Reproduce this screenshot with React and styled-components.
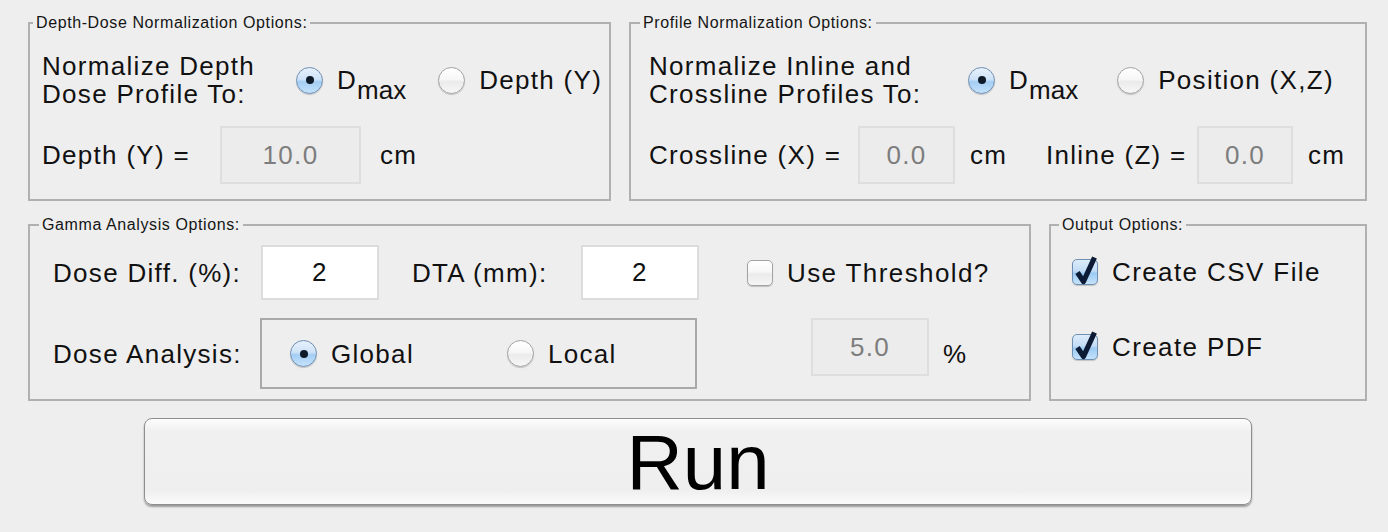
import React from 'react';
import styled, { createGlobalStyle } from 'styled-components';

const GlobalStyle = createGlobalStyle`
  html, body {
    margin: 0;
    padding: 0;
    background: #eeeeee;
  }
  body {
    font-family: "Liberation Sans", Arial, sans-serif;
    color: #111;
  }
`;

const Window = styled.div`
  box-sizing: border-box;
  width: 1388px;
  height: 532px;
  padding: 13px 0 0 28px;
  display: flex;
  flex-direction: column;
`;

const PanelRow = styled.div`
  display: flex;
  gap: 18px;
  margin-top: ${p => p.$top || 0}px;
`;

const Panel = styled.fieldset`
  box-sizing: border-box;
  width: ${p => p.$w}px;
  min-width: 0;
  margin: 0;
  padding: ${p => p.$pad};
  border: 2px solid #b0b0b0;
`;

const Legend = styled.legend`
  font-size: 16px;
  letter-spacing: 0.6px;
  line-height: 20px;
  padding: 0 3px;
  margin-left: ${p => p.$indent}px;
  color: #151515;
`;

const Row = styled.div`
  display: flex;
  align-items: ${p => p.$align || 'center'};
  margin-top: ${p => p.$top || 0}px;
`;

const Text = styled.div`
  flex: none;
  width: ${p => (p.$w ? `${p.$w}px` : 'auto')};
  margin-left: ${p => p.$ml || 0}px;
  align-self: ${p => p.$self || 'auto'};
  font-size: 26px;
  letter-spacing: 1.3px;
  line-height: 28px;
  white-space: nowrap;
`;

const TextBox = styled.div`
  box-sizing: border-box;
  flex: none;
  width: ${p => p.$w}px;
  height: ${p => p.$h || 58}px;
  margin-left: ${p => p.$ml || 0}px;
  display: flex;
  align-items: center;
  justify-content: center;
  font-size: 26px;
  letter-spacing: 1.3px;
  border: 2px solid ${p => (p.$off ? '#dedede' : '#dcdcdc')};
  background: ${p => (p.$off ? '#ececec' : '#ffffff')};
  color: ${p => (p.$off ? '#7d7d7d' : '#111')};
`;

const Options = styled.div`
  display: flex;
  align-items: center;
  gap: ${p => p.$gap}px;
`;

const Option = styled.label`
  display: flex;
  align-items: center;
  gap: 14px;
  font-size: 26px;
  letter-spacing: 1.3px;
  line-height: 28px;
  white-space: nowrap;
`;

const RadioDot = styled.span`
  box-sizing: border-box;
  flex: none;
  width: 27px;
  height: 27px;
  border-radius: 50%;
  display: flex;
  align-items: center;
  justify-content: center;
  border: 1px solid ${p => (p.$on ? '#6f8fb2' : '#a2a2a2')};
  background: ${p =>
    p.$on
      ? 'linear-gradient(#e6f1fc 0%, #cfe3f8 45%, #a4cdf3 55%, #c4e2fb 100%)'
      : 'linear-gradient(#ffffff 0%, #f7f7f7 45%, #ebebeb 55%, #f7f7f7 100%)'};
  box-shadow: 0 1px 1px rgba(0, 0, 0, 0.18);

  &::after {
    content: '';
    display: ${p => (p.$on ? 'block' : 'none')};
    width: 8px;
    height: 8px;
    border-radius: 50%;
    background: #0e1a27;
  }
`;

const Sub = styled.sub`
  font-size: 26px;
  vertical-align: -10px;
  line-height: 0;
  letter-spacing: 0;
`;

const GroupBox = styled.div`
  box-sizing: border-box;
  width: 437px;
  height: 71px;
  padding-left: 28px;
  display: flex;
  align-items: center;
  border: 2px solid #a9a9a9;
`;

const CheckWrap = styled.label`
  display: flex;
  align-items: center;
  gap: 14px;
  margin-left: ${p => p.$ml || 0}px;
  margin-top: ${p => p.$top || 0}px;
  font-size: 26px;
  letter-spacing: 1.4px;
  line-height: 36px;
  white-space: nowrap;
`;

const Box = styled.span`
  box-sizing: border-box;
  flex: none;
  width: 26px;
  height: 26px;
  border-radius: 5px;
  display: flex;
  border: 1px solid ${p => (p.$on ? '#6f8fb2' : '#a2a2a2')};
  background: ${p =>
    p.$on
      ? 'linear-gradient(#dcecfb 0%, #c3dcf6 45%, #9ccaf3 55%, #c4e2fb 100%)'
      : 'linear-gradient(#ffffff 0%, #f7f7f7 45%, #ebebeb 55%, #f5f5f5 100%)'};
  box-shadow: 0 1px 1px rgba(0, 0, 0, 0.18);

  svg {
    overflow: visible;
  }
`;

const RunRow = styled.div`
  margin-top: 17px;
  padding-left: 116px;
`;

const RunButton = styled.button`
  box-sizing: border-box;
  width: 1108px;
  height: 87px;
  border: 1px solid #8e8e8e;
  border-radius: 8px;
  background: linear-gradient(#fdfdfd 0%, #f0f0f0 14%, #efefef 84%, #fbfbfb 100%);
  box-shadow: 0 2px 2px rgba(0, 0, 0, 0.35);
  font-family: "Liberation Sans", Arial, sans-serif;
  font-size: 78px;
  line-height: 1;
  color: #000;
  padding: 0;
`;

function Radio({ on, children }) {
  return (
    <Option>
      <RadioDot $on={on} />
      <span>{children}</span>
    </Option>
  );
}

function Check({ on, children, ml, top }) {
  return (
    <CheckWrap $ml={ml} $top={top}>
      <Box $on={on}>
        {on && (
          <svg width="26" height="26" viewBox="0 0 26 26">
            <path
              d="M4.5 12.5 L10.5 21.5 L21.5 -2.5"
              fill="none"
              stroke="#0c1a35"
              strokeWidth="5.2"
              strokeLinecap="butt"
              strokeLinejoin="round"
            />
          </svg>
        )}
      </Box>
      <span>{children}</span>
    </CheckWrap>
  );
}

const Dmax = () => (
  <>
    D<Sub>max</Sub>
  </>
);

export default function App() {
  return (
    <Window>
      <GlobalStyle />
      <PanelRow>
        <Panel $w={583} $pad="19px 12px 15px 12px">
          <Legend $indent={-9}>Depth-Dose Normalization Options:</Legend>
          <Row>
            <Text $w={254}>
              Normalize Depth
              <br />
              Dose Profile To:
            </Text>
            <Options $gap={32}>
              <Radio on>
                <Dmax />
              </Radio>
              <Radio>Depth (Y)</Radio>
            </Options>
          </Row>
          <Row $top={18}>
            <Text $w={178}>Depth (Y) =</Text>
            <TextBox $w={141} $off>
              10.0
            </TextBox>
            <Text $ml={19}>cm</Text>
          </Row>
        </Panel>

        <Panel $w={738} $pad="19px 18px 15px 18px">
          <Legend $indent={-9}>Profile Normalization Options:</Legend>
          <Row>
            <Text $w={319}>
              Normalize Inline and
              <br />
              Crossline Profiles To:
            </Text>
            <Options $gap={39}>
              <Radio on>
                <Dmax />
              </Radio>
              <Radio>Position (X,Z)</Radio>
            </Options>
          </Row>
          <Row $top={18}>
            <Text $w={209}>Crossline (X) =</Text>
            <TextBox $w={97} $off>
              0.0
            </TextBox>
            <Text $w={76} $ml={15}>
              cm
            </Text>
            <Text $w={151}>Inline (Z) =</Text>
            <TextBox $w={96} $off>
              0.0
            </TextBox>
            <Text $ml={15}>cm</Text>
          </Row>
        </Panel>
      </PanelRow>

      <PanelRow $top={14}>
        <Panel $w={1003} $pad="10px 23px 10px 23px">
          <Legend $indent={-14}>Gamma Analysis Options:</Legend>
          <Row>
            <Text $w={208}>Dose Diff. (%):</Text>
            <TextBox $w={118} $h={55}>
              2
            </TextBox>
            <Text $w={169} $ml={33}>
              DTA (mm):
            </Text>
            <TextBox $w={118} $h={55}>
              2
            </TextBox>
            <Check ml={48}>Use Threshold?</Check>
          </Row>
          <Row $top={18} $align="flex-start">
            <Text $w={207} $self="center">
              Dose Analysis:
            </Text>
            <GroupBox>
              <Options $gap={93}>
                <Radio on>Global</Radio>
                <Radio>Local</Radio>
              </Options>
            </GroupBox>
            <TextBox $w={118} $ml={114} $off>
              5.0
            </TextBox>
            <Text $ml={14} $self="center">
              %
            </Text>
          </Row>
        </Panel>

        <Panel $w={318} $pad="19px 21px 10px 21px">
          <Legend $indent={-13}>Output Options:</Legend>
          <Check on>Create CSV File</Check>
          <Check on top={39}>
            Create PDF
          </Check>
        </Panel>
      </PanelRow>

      <RunRow>
        <RunButton>Run</RunButton>
      </RunRow>
    </Window>
  );
}
